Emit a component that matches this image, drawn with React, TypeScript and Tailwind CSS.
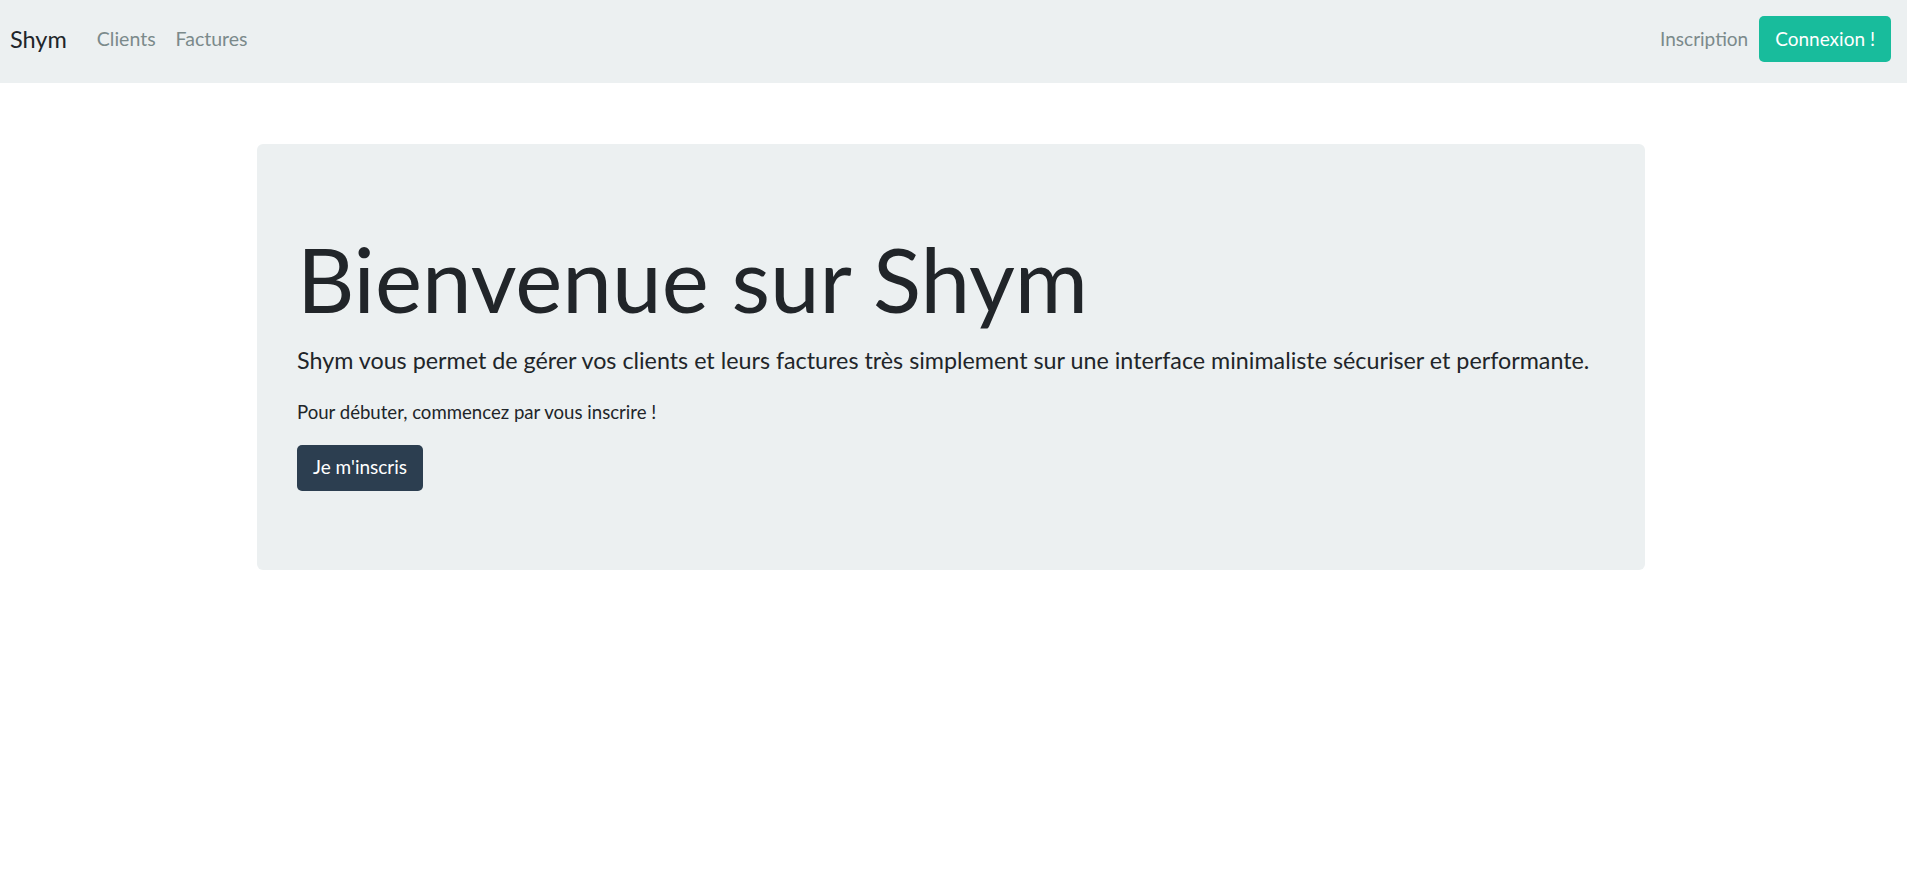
import React from "react";

const font = { fontFamily: "Lato, 'Open Sans', 'Liberation Sans', sans-serif" };

export default function App() {
  return (
    <div className="min-h-[883px] bg-white text-[#212529]" style={font}>
      {/* Navbar */}
      <nav className="h-[83px] bg-[#ecf0f1] flex items-center pl-[10px] pr-[16px] pb-[5px]">
        <a href="#" className="text-[23.5px] leading-[1.5] text-[#212529] mr-[30px] pt-[2px]">
          Shym
        </a>
        <div className="flex items-center gap-[20px] text-[19.5px] leading-[1.5] text-[#7b8a8b]">
          <a href="#">Clients</a>
          <a href="#">Factures</a>
        </div>
        <div className="ml-auto flex items-center gap-[11px]">
          <a href="#" className="text-[19px] leading-[1.5] text-[#7b8a8b]">
            Inscription
          </a>
          <button className="h-[46px] px-[16px] rounded-[5px] bg-[#18bc9c] text-white text-[19px] leading-[1.5]">
            Connexion !
          </button>
        </div>
      </nav>

      {/* Jumbotron */}
      <main className="pt-[61px]">
        <section className="ml-[257px] w-[1388px] h-[426px] rounded-[6px] bg-[#ecf0f1] px-[40px] pt-[82px]">
          <h1 className="text-[89px] leading-[1.2] font-normal mb-[10px]">Bienvenue sur Shym</h1>
          <p className="text-[23.3px] leading-[1.5] mb-[21px]">
            Shym vous permet de gérer vos clients et leurs factures très simplement sur une interface minimaliste sécuriser et performante.
          </p>
          <p className="text-[18.6px] leading-[1.5] mb-[18px]">Pour débuter, commencez par vous inscrire !</p>
          <button className="h-[46px] px-[16px] rounded-[5px] bg-[#2c3e50] text-white text-[19px] leading-[1.5]">
            Je m'inscris
          </button>
        </section>
      </main>
    </div>
  );
}
